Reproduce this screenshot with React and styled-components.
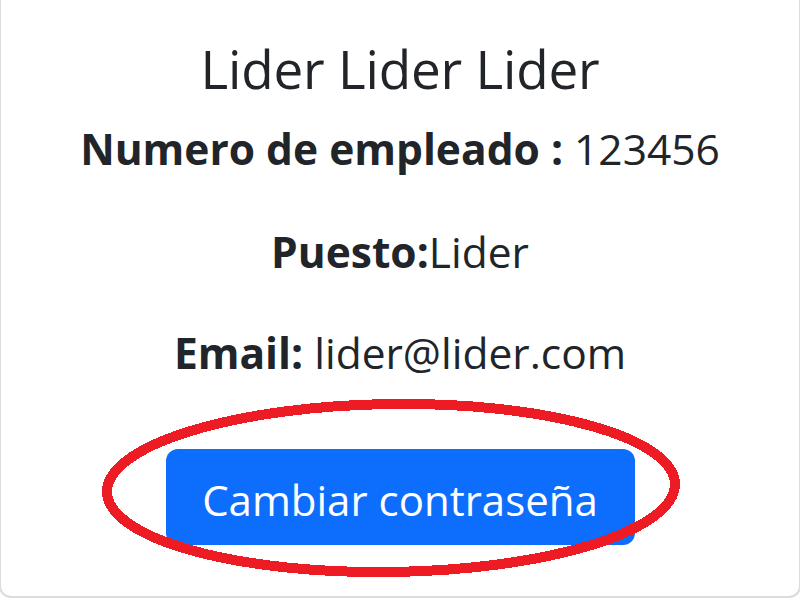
import React from "react";
import styled, { createGlobalStyle } from "styled-components";

const Global = createGlobalStyle`
  html, body { margin: 0; padding: 0; background: #ffffff; }
  body { width: 800px; height: 600px; overflow: hidden; font-family: "Open Sans", "Noto Sans", sans-serif; color: #212529; }
`;

const Page = styled.div`
  position: relative;
  width: 800px;
  height: 600px;
  overflow: hidden;
  background: #ffffff;
`;

const Card = styled.div`
  box-sizing: border-box;
  margin: -20px -1px 0;
  height: 618px;
  background: #ffffff;
  border: 2px solid #dcdcdc;
  border-top: none;
  border-radius: 0 0 12px 12px;
  display: flex;
  flex-direction: column;
  align-items: center;
  padding-top: 58px;
`;

const Title = styled.h1`
  margin: 0;
  font-size: 53px;
  font-weight: 400;
  line-height: 62px;
  letter-spacing: -0.2px;
`;

const Info = styled.p`
  margin: ${(p) => p.$top}px 0 0;
  font-size: 42.5px;
  line-height: 50px;
  font-weight: 400;
  white-space: nowrap;
`;

const Label = styled.b`
  font-weight: 700;
`;

const Button = styled.button`
  margin-top: 71px;
  width: 469px;
  height: 96px;
  border: none;
  border-radius: 12px;
  background: #0d6efd;
  color: #ffffff;
  font-family: "Open Sans", "Noto Sans", sans-serif;
  font-size: 42px;
  padding: 4px 0 0;
  cursor: pointer;
`;

const Annotation = styled.svg`
  position: absolute;
  left: 0;
  top: 0;
  pointer-events: none;
`;

export default function App() {
  return (
    <Page>
      <Global />
      <Card>
        <Title>Lider Lider Lider</Title>
        <Info $top={24}>
          <Label>Numero de empleado : </Label>123456
        </Info>
        <Info $top={53}>
          <Label>Puesto:</Label>Lider
        </Info>
        <Info $top={51}>
          <Label>Email:</Label> lider@lider.com
        </Info>
        <Button>Cambiar contraseña</Button>
      </Card>
      <Annotation width="800" height="600" viewBox="0 0 800 600">
        <ellipse
          cx="391"
          cy="488"
          rx="284"
          ry="84"
          fill="none"
          stroke="#ed1c24"
          strokeWidth="10"
          transform="rotate(-0.8 391 488)"
          shapeRendering="crispEdges"
        />
      </Annotation>
    </Page>
  );
}
